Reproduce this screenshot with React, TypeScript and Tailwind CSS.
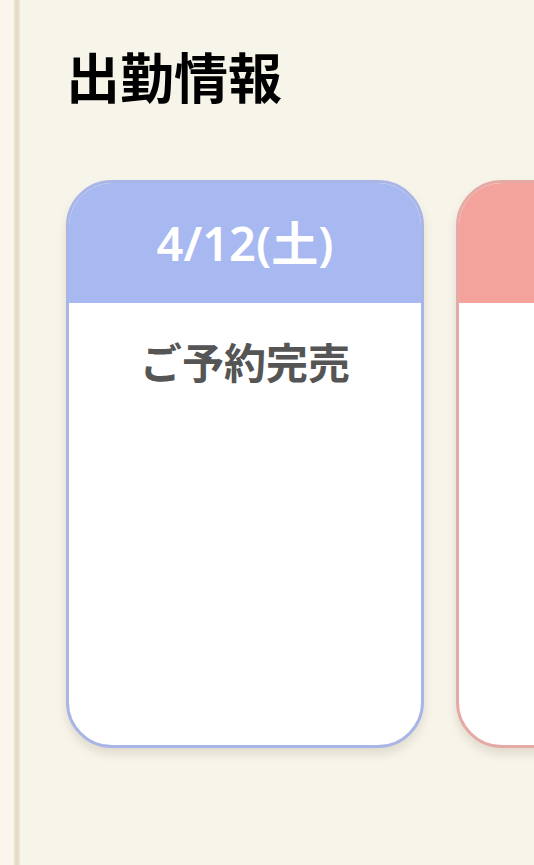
import React from "react";

export default function App() {
  return (
    <div className="w-[534px] h-[865px] overflow-hidden bg-[#f7f4ea] flex" style={{ fontFamily: '"Noto Sans", "Noto Sans CJK JP", sans-serif' }}>
      <div className="w-[14px] shrink-0 bg-[#faf6ec]" />
      <div className="w-[6px] shrink-0 bg-gradient-to-r from-[#ece4d0] via-[#e2d9c2] to-[#efe9d9]" />
      <div className="flex-1 min-w-0 pl-[46px] pt-[41px]">
        <h1 className="text-[54px] leading-[70px] font-bold text-black" style={{ fontFamily: '"Noto Sans CJK JP", sans-serif' }}>
          出勤情報
        </h1>
        <div className="flex gap-[32px] mt-[69px]">
          <div className="w-[358px] h-[568px] shrink-0 rounded-[46px] border-[3px] border-[#a9b5e6] bg-white overflow-hidden shadow-[0_6px_10px_rgba(120,110,80,0.18)] flex flex-col">
            <div className="h-[120px] bg-[#a8b8f0] flex items-center justify-center">
              <span className="text-white text-[47px] font-semibold leading-none" style={{ fontFamily: '"Noto Sans", "Noto Sans CJK JP", sans-serif' }}>4/12(土)</span>
            </div>
            <div className="flex justify-center pt-[32px]">
              <span className="text-[#555555] text-[42px] leading-[52px] font-bold" style={{ fontFamily: '"Noto Sans CJK JP", sans-serif' }}>ご予約完売</span>
            </div>
          </div>
          <div className="w-[358px] h-[568px] shrink-0 rounded-[46px] border-[3px] border-[#e6aaa6] bg-white overflow-hidden shadow-[0_6px_10px_rgba(120,110,80,0.18)] flex flex-col">
            <div className="h-[120px] bg-[#f4a39c]" />
          </div>
        </div>
      </div>
    </div>
  );
}
